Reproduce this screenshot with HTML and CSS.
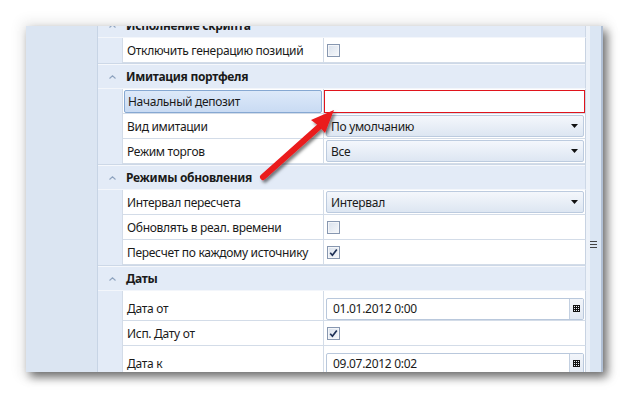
FILE: index.html
```html
<!DOCTYPE html>
<html lang="ru">
<head>
<meta charset="utf-8">
<link rel="stylesheet" href="styles.css">
</head>
<body>
<div class="stage">
  <div class="window">
    <div class="sidepanel"></div>
    <div class="grid">
      <div class="rows">
        <div class="header"><span class="chev"><svg width="7" height="4" viewBox="0 0 7 4"><path d="M0.5 3.5 L3.5 0.8 L6.5 3.5" fill="none" stroke="#8ea3bf" stroke-width="1.1"/></svg></span><span class="htitle">Исполнение скрипта</span></div>
        <div class="row"><div class="indent"></div><div class="label">Отключить генерацию позиций</div><div class="value"><span class="cb"></span></div></div>

        <div class="header"><span class="chev"><svg width="7" height="4" viewBox="0 0 7 4"><path d="M0.5 3.5 L3.5 0.8 L6.5 3.5" fill="none" stroke="#8ea3bf" stroke-width="1.1"/></svg></span><span class="htitle">Имитация портфеля</span></div>
        <div class="row"><div class="indent"></div><div class="label"><span class="selected">Начальный депозит</span></div><div class="value"><span class="edit-red"></span></div></div>
        <div class="row"><div class="indent"></div><div class="label">Вид имитации</div><div class="value"><span class="combo"><span class="ctext">По умолчанию</span><svg width="7" height="4" viewBox="0 0 7 4"><path d="M0 0 H7 L3.5 4 Z" fill="#111"/></svg></span></div></div>
        <div class="row"><div class="indent"></div><div class="label">Режим торгов</div><div class="value"><span class="combo"><span class="ctext">Все</span><svg width="7" height="4" viewBox="0 0 7 4"><path d="M0 0 H7 L3.5 4 Z" fill="#111"/></svg></span></div></div>

        <div class="header"><span class="chev"><svg width="7" height="4" viewBox="0 0 7 4"><path d="M0.5 3.5 L3.5 0.8 L6.5 3.5" fill="none" stroke="#8ea3bf" stroke-width="1.1"/></svg></span><span class="htitle">Режимы обновления</span></div>
        <div class="row"><div class="indent"></div><div class="label">Интервал пересчета</div><div class="value"><span class="combo"><span class="ctext">Интервал</span><svg width="7" height="4" viewBox="0 0 7 4"><path d="M0 0 H7 L3.5 4 Z" fill="#111"/></svg></span></div></div>
        <div class="row"><div class="indent"></div><div class="label">Обновлять в реал. времени</div><div class="value"><span class="cb"></span></div></div>
        <div class="row"><div class="indent"></div><div class="label">Пересчет по каждому источнику</div><div class="value"><span class="cb"><svg width="11" height="11" viewBox="0 0 11 11"><path d="M2.2 5.8 L4.4 8.2 L8.8 2.4" fill="none" stroke="#1d2f55" stroke-width="1.7"/></svg></span></div></div>

        <div class="header"><span class="chev"><svg width="7" height="4" viewBox="0 0 7 4"><path d="M0.5 3.5 L3.5 0.8 L6.5 3.5" fill="none" stroke="#8ea3bf" stroke-width="1.1"/></svg></span><span class="htitle">Даты</span></div>
        <div class="row tall"><div class="indent"></div><div class="label">Дата от</div><div class="value"><span class="date"><span class="dtext">01.01.2012 0:00</span><span class="dbtn"><svg width="7" height="7" viewBox="0 0 7 7"><path d="M0 0H7V7H0Z M1 1V2H2V1Z M3 1V2H4V1Z M5 1V2H6V1Z M1 3V4H2V3Z M3 3V4H4V3Z M5 3V4H6V3Z M1 5V6H2V5Z M3 5V6H4V5Z M5 5V6H6V5Z" fill="#111" fill-rule="evenodd"/></svg></span></span></div></div>
        <div class="row"><div class="indent"></div><div class="label">Исп. Дату от</div><div class="value"><span class="cb"><svg width="11" height="11" viewBox="0 0 11 11"><path d="M2.2 5.8 L4.4 8.2 L8.8 2.4" fill="none" stroke="#1d2f55" stroke-width="1.7"/></svg></span></div></div>
        <div class="row tall"><div class="indent"></div><div class="label">Дата к</div><div class="value"><span class="date"><span class="dtext">09.07.2012 0:02</span><span class="dbtn"><svg width="7" height="7" viewBox="0 0 7 7"><path d="M0 0H7V7H0Z M1 1V2H2V1Z M3 1V2H4V1Z M5 1V2H6V1Z M1 3V4H2V3Z M3 3V4H4V3Z M5 3V4H6V3Z M1 5V6H2V5Z M3 5V6H4V5Z M5 5V6H6V5Z" fill="#111" fill-rule="evenodd"/></svg></span></span></div></div>
      </div>
    </div>
    <div class="scrollbar"><span class="grip"></span></div>
  </div>
</div>
<svg class="arrow" width="630" height="398" viewBox="0 0 630 398">
  <defs>
    <filter id="sh" x="-20%" y="-20%" width="140%" height="140%">
      <feDropShadow dx="2" dy="2.5" stdDeviation="1.6" flood-color="#000" flood-opacity="0.5"/>
    </filter>
  </defs>
  <g filter="url(#sh)">
    <line x1="263" y1="177" x2="319" y2="127" stroke="#ea1a1f" stroke-width="6" stroke-linecap="round"/>
    <path d="M334 110 L325 133 L319 126 L311 120 Z" fill="#ea1a1f"/>
  </g>
</svg>
</body>
</html>
```

FILE: styles.css
```css
html, body {
  margin: 0;
  padding: 0;
  background: #ffffff;
}
body {
  width: 630px;
  height: 398px;
  overflow: hidden;
  position: relative;
  font-family: "Noto Sans", "Open Sans", sans-serif;
  font-size: 12px;
  letter-spacing: -0.3px;
  color: #1a1a1a;
}
.stage {
  padding: 26px 0 0 26px;
}
.window {
  width: 577px;
  height: 346px;
  display: flex;
  overflow: hidden;
  background: #e3ebf7;
  box-shadow: 4px 5px 9px rgba(0, 0, 0, 0.55), 0 0 12px 5px rgba(0, 0, 0, 0.07);
}
.sidepanel {
  width: 71px;
  flex: none;
  background: #dbe5f2;
  border-right: 1px solid #c7d4e5;
}
.grid {
  width: 488px;
  flex: none;
  background: #e3ebf7;
}
.rows {
  margin-top: -14px;
}
.header {
  height: 24px;
  display: flex;
  align-items: center;
  border-top: 1px solid #cdd8e7;
  border-bottom: 1px solid #f3f6fb;
  border-right: 1px solid #cdd8e7;
  box-shadow: inset 0 1px 0 #f6f8fc;
  background: #e3ebf7;
}
.chev {
  width: 28px;
  display: flex;
  justify-content: center;
  padding-top: 2px;
}
.htitle {
  font-weight: bold;
}
.row {
  display: grid;
  grid-template-columns: 24px 201px 263px;
  height: 25px;
}
.row.tall {
  height: 30px;
}
.indent {
  background: #e3ebf7;
}
.label {
  background: #ffffff;
  border-left: 1px solid #d3dce8;
  border-bottom: 1px solid #d3dce8;
  padding-left: 4px;
  display: flex;
  align-items: center;
  white-space: nowrap;
}
.tall .label {
  padding-top: 5px;
}
.value {
  background: #ffffff;
  border-left: 1px solid #d3dce8;
  border-right: 1px solid #c8d3e2;
  border-bottom: 1px solid #d3dce8;
  display: flex;
  align-items: center;
  padding-left: 2px;
}
.selected {
  margin-left: -3px;
  margin-right: 1px;
  height: 21px;
  flex: 1;
  display: flex;
  align-items: center;
  padding-left: 3px;
  border: 1px solid #86a8d2;
  border-radius: 2px;
  background: linear-gradient(#dde9f9, #c9dbf3);
}
.edit-red {
  margin-left: -2px;
  height: 21px;
  flex: 1;
  border: 1px solid #e0141c;
  background: #ffffff;
}
.combo {
  flex: 1;
  height: 20px;
  margin-right: 1px;
  border: 1px solid #bccbdf;
  border-radius: 2px;
  background: linear-gradient(#f4f7fc, #dde6f2);
  display: flex;
  align-items: center;
  justify-content: space-between;
  padding: 0 5px 0 4px;
}
.cb {
  width: 11px;
  height: 11px;
  border: 1px solid #8797b0;
  background: linear-gradient(135deg, #d9e1ec, #f6f8fb);
  box-shadow: inset 0 0 0 1px #f4f6f9;
  display: flex;
  align-items: center;
  justify-content: center;
  margin-left: 1px;
}
.date {
  flex: 1;
  height: 20px;
  margin-top: 6px;
  margin-right: 1px;
  border: 1px solid #b9c8dc;
  border-radius: 2px;
  background: #ffffff;
  display: flex;
  align-items: center;
  justify-content: space-between;
}
.dtext {
  padding-left: 6px;
}
.dbtn {
  width: 13px;
  height: 100%;
  border-left: 1px solid #c3d0e1;
  background: linear-gradient(#f2f5fa, #e1e8f2);
  display: flex;
  align-items: center;
  justify-content: center;
}
.scrollbar {
  width: 15px;
  flex: none;
  background: linear-gradient(to right, #edf2f9 0, #edf2f9 4px, #dbe6f3 4px);
  border-right: 3px solid #b0bfd4;
  display: flex;
  justify-content: center;
  padding-top: 215px;
}
.grip {
  width: 7px;
  height: 5px;
  border-top: 1px solid #444;
  border-bottom: 1px solid #444;
  background: linear-gradient(#444, #444) center / 100% 1px no-repeat;
}
.arrow {
  position: absolute;
  left: 0;
  top: 0;
  pointer-events: none;
}
```
